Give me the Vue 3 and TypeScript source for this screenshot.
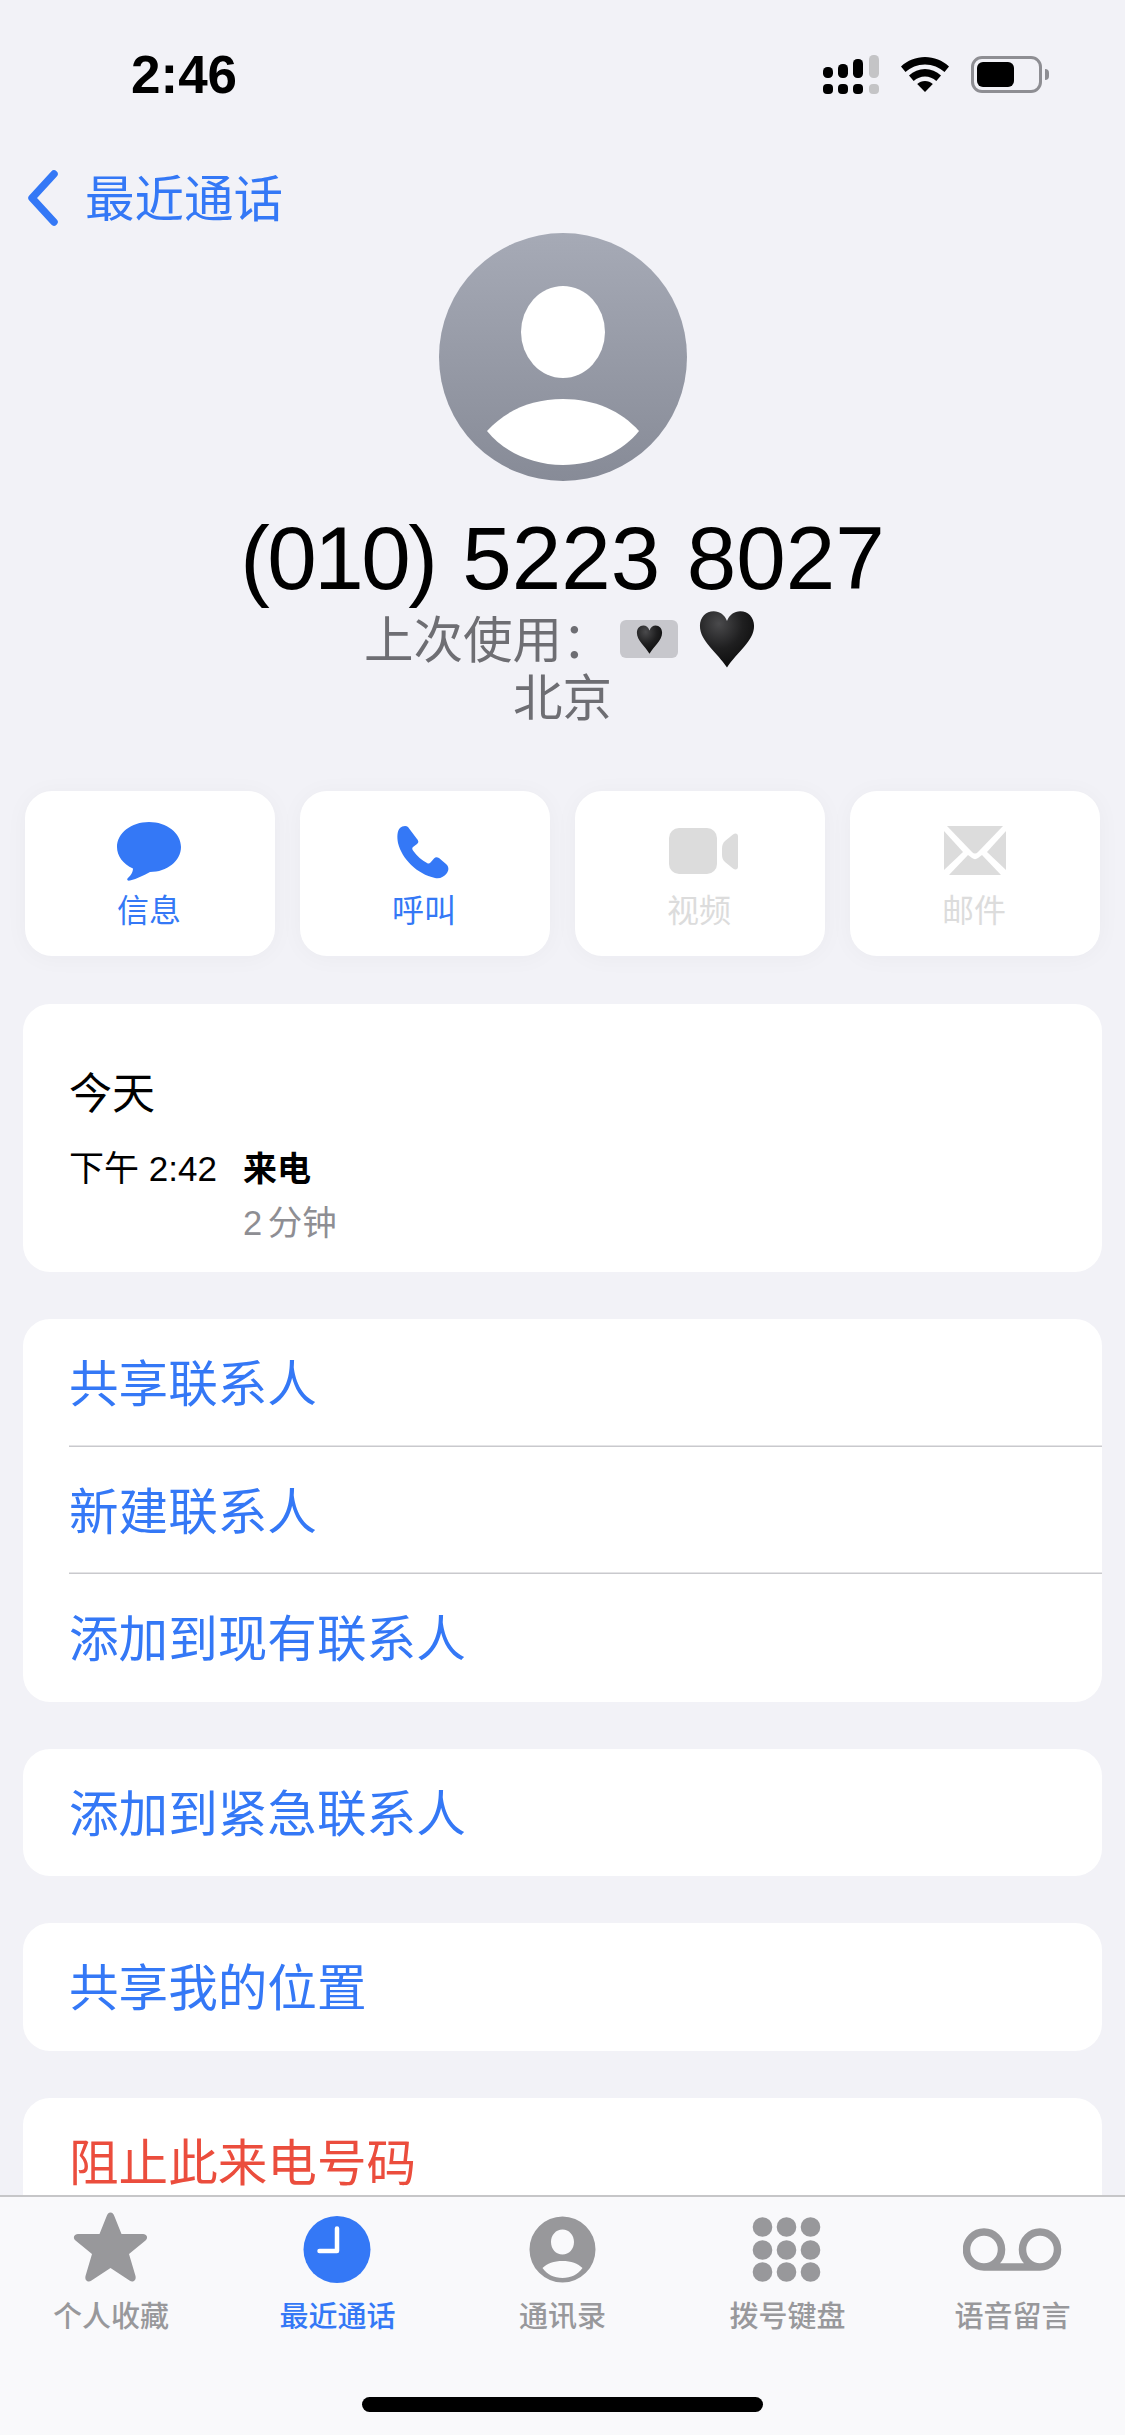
<template>
  <div class="screen">
    <!-- Status bar -->
    <div class="status-bar">
      <span class="clock">2:46</span>
      <div class="status-icons">
        <svg width="56" height="39" viewBox="0 0 56 39">
          <g fill="#000">
            <rect x="0" y="12" width="10" height="11" rx="4.5" />
            <rect x="0" y="29" width="10" height="10" rx="4" />
            <rect x="15" y="9" width="10" height="14" rx="4.5" />
            <rect x="15" y="29" width="10" height="10" rx="4" />
            <rect x="30" y="4" width="10" height="19" rx="4.5" />
            <rect x="30" y="29" width="10" height="10" rx="4" />
          </g>
          <g fill="#c4c4c6">
            <rect x="46" y="0" width="10" height="23" rx="4.5" />
            <rect x="46" y="29" width="10" height="10" rx="4" />
          </g>
        </svg>
        <svg width="48" height="35" viewBox="0 0 48 35">
          <path d="M24 0C15 0 6.500 3.500 0 9.500L4.500 15C9.500 10.500 16.500 7.500 24 7.500C31.500 7.500 38.500 10.500 43.500 15L48 9.500C41.500 3.500 33 0 24 0Z" />
          <path d="M24 12C18 12 12.500 14.300 8 18.500L12.700 24C16 21 19.800 19.400 24 19.400C28.200 19.400 32 21 35.300 24L40 18.500C35.500 14.300 30 12 24 12Z" />
          <path d="M24 24C21 24 18.400 25 16.200 27L24 35L31.800 27C29.600 25 27 24 24 24Z" />
        </svg>
        <div class="battery">
          <div class="battery-level"></div>
          <span class="battery-nub"></span>
        </div>
      </div>
    </div>

    <!-- Nav -->
    <div class="nav">
      <svg width="32" height="56" viewBox="0 0 32 56">
        <path d="M27 4 5 28l22 24" fill="none" stroke="#3478f6" stroke-width="7.500" stroke-linecap="round" stroke-linejoin="round" />
      </svg>
      <span class="nav-title">最近通话</span>
    </div>

    <!-- Caller header -->
    <div class="caller">
      <svg class="avatar" width="248" height="248" viewBox="0 0 248 248">
        <defs>
          <linearGradient id="avatarFill" x1="0" y1="0" x2="0" y2="1">
            <stop offset="0" stop-color="#a6aab6" />
            <stop offset="1" stop-color="#878b97" />
          </linearGradient>
          <radialGradient id="heartFill" cx="0.35" cy="0.22" r="0.8">
            <stop offset="0" stop-color="#4a4a4c" />
            <stop offset="0.55" stop-color="#1f1f20" />
            <stop offset="1" stop-color="#0c0c0c" />
          </radialGradient>
        </defs>
        <circle cx="124" cy="124" r="124" fill="url(#avatarFill)" />
        <ellipse cx="124" cy="99" rx="42" ry="46" fill="#fff" />
        <path d="M48 198C66 178 92 166 124 166C156 166 182 178 200 198C184 218 156 232 124 232C92 232 64 218 48 198Z" fill="#fff" />
      </svg>
      <div class="number"><span class="area-code">(010)</span> 5223 8027</div>
      <div class="last-used">
        <span class="last-used-text">上次使用：</span>
        <span class="sim-badge">
          <svg width="27" height="29" viewBox="0 0 24 24" preserveAspectRatio="none"><path :d="heartPath" fill="url(#heartFill)" /></svg>
        </span>
        <svg class="big-heart" width="58" height="58" viewBox="0 0 24 24" preserveAspectRatio="none"><path :d="heartPath" fill="url(#heartFill)" /></svg>
      </div>
      <div class="location">北京</div>
    </div>

    <!-- Action buttons -->
    <div class="actions">
      <div v-for="action in actions" :key="action.label" :class="['action', { disabled: action.disabled }]">
        <svg width="80" height="62" viewBox="-5 0 80 62" class="action-icon">
          <template v-if="action.icon === 'message'">
            <path d="M34 1C16.300 1 2 12.200 2 26C2 35 8 43 18 47.500C18 52 15 55 12.500 57.500C11.500 59 13 60 15 59.500C22 58 29 54 35 51C52 51 66 40 66 26C66 12.200 51.700 1 34 1Z" />
          </template>
          <template v-else-if="action.icon === 'phone'">
            <path d="M10 7C12 5 16 4 18 6L27 18C29 20.500 28.500 21.500 27 23L23 26C22 27 22 28 23 29.500C27 35 32 39.500 37 42C38.500 43 39.500 42.500 40.500 41.500L44 37.500C45.500 36 47 36 49 37L56 43C59 45.500 59 49 57 52C54 56 50 58 45 57C27 53 12 38 8 22C7 16 7 10 10 7Z" />
          </template>
          <template v-else-if="action.icon === 'video'">
            <rect x="4" y="7" width="48" height="46" rx="10" />
            <path d="M57 28C57 24 58 22 60 20L68 13.500C70.500 11.500 73 12.500 73 15.500V45.500C73 48.500 70.500 49.500 68 47.500L60 41C58 39 57 37 57 34Z" />
          </template>
          <template v-else>
            <path d="M7 5H63L38 31C36 33 34 33 32 31Z" />
            <path d="M4 10 23 31 4 49Z" />
            <path d="M66 10 47 31 66 49Z" />
            <path d="M9 54 28 34 32 37C34 38.500 36 38.500 38 37L42 34 61 54Z" />
          </template>
        </svg>
        <span class="action-label">{{ action.label }}</span>
      </div>
    </div>

    <!-- Call record -->
    <div class="card record">
      <div class="record-day">今天</div>
      <div class="record-row">
        <span class="record-time">下午 2:42</span>
        <div>
          <div class="record-kind">来电</div>
          <div class="record-length">2 分钟</div>
        </div>
      </div>
    </div>

    <!-- Link groups -->
    <div v-for="(group, index) in groups" :key="index" class="card group">
      <div v-for="row in group.rows" :key="row" :class="['row', { danger: group.danger }]">
        <span class="row-text">{{ row }}</span>
      </div>
    </div>

    <!-- Tab bar -->
    <div class="tab-bar">
      <div class="tabs">
        <div v-for="tab in tabs" :key="tab.label" :class="['tab', { active: tab.active }]">
          <svg width="100" height="72" viewBox="0 0 100 72" class="tab-icon">
            <path
              v-if="tab.icon === 'star'"
              d="M49.500 .5C51.500 .5 52.500 2 53.500 4.500L60.500 22H82C86 22 87.500 26 84.500 28.500L68 42L74.500 64C75.500 68.500 72 71 68.500 68.500L49.500 56L30.500 68.500C27 71 23.500 68.500 24.500 64L31 42L14.500 28.500C11.500 26 13 22 17 22H38.500L45.500 4.500C46.500 2 47.500 .5 49.500 .5Z"
            />
            <template v-else-if="tab.icon === 'clock'">
              <circle cx="49" cy="37.500" r="33.500" />
              <path d="M49 16.500V39H31.500" fill="none" stroke="#fff" stroke-width="4.500" stroke-linecap="round" stroke-linejoin="round" />
            </template>
            <path
              v-else-if="tab.icon === 'person'"
              fill-rule="evenodd"
              d="M49.500 4.500A33 33 0 1 0 49.500 70.500A33 33 0 1 0 49.500 4.500ZM49.500 17.500C56 17.500 61 23 61 30S56 42.500 49.500 42.500S38 37 38 30S43 17.500 49.500 17.500ZM29.500 56C34 51.500 41 49 49.500 49S65 51.500 69.500 56C65 62.500 58 66 49.500 66S34 62.500 29.500 56Z"
            />
            <template v-else-if="tab.icon === 'keypad'">
              <circle v-for="dot in keypadDots" :key="dot.x + '-' + dot.y" :cx="dot.x" :cy="dot.y" r="9.800" />
            </template>
            <path
              v-else
              fill="none"
              stroke-width="7.500"
              d="M21 55H77M21 20A17.500 17.500 0 1 0 21 55A17.500 17.500 0 1 0 21 20ZM77 20A17.500 17.500 0 1 0 77 55A17.500 17.500 0 1 0 77 20Z"
            />
          </svg>
          <span class="tab-label">{{ tab.label }}</span>
        </div>
      </div>
      <div class="home-indicator"></div>
    </div>
  </div>
</template>

<script setup lang="ts">
interface Action {
  label: string;
  icon: string;
  disabled?: boolean;
}

interface Group {
  rows: string[];
  danger?: boolean;
}

interface Tab {
  label: string;
  icon: string;
  active?: boolean;
}

const heartPath = 'M12 23.800C8 17.500 .8 13 .8 6.500C.8 3 3.300 .5 6.500 .5C9 .5 11 2 12 4.500C13 2 15 .5 17.500 .5C20.700 .5 23.200 3 23.200 6.500C23.200 13 16 17.500 12 23.800Z';

const actions: Action[] = [
  { label: '信息', icon: 'message' },
  { label: '呼叫', icon: 'phone' },
  { label: '视频', icon: 'video', disabled: true },
  { label: '邮件', icon: 'mail', disabled: true }
];

const groups: Group[] = [
  { rows: ['共享联系人', '新建联系人', '添加到现有联系人'] },
  { rows: ['添加到紧急联系人'] },
  { rows: ['共享我的位置'] },
  { rows: ['阻止此来电号码'], danger: true }
];

const tabs: Tab[] = [
  { label: '个人收藏', icon: 'star' },
  { label: '最近通话', icon: 'clock', active: true },
  { label: '通讯录', icon: 'person' },
  { label: '拨号键盘', icon: 'keypad' },
  { label: '语音留言', icon: 'voicemail' }
];

const keypadDots = [15, 38, 60].flatMap((y) => [24.5, 48.5, 72.5].map((x) => ({ x, y })));
</script>

<style>
html,
body {
  margin: 0;
  background: #f2f2f7;
}
</style>

<style scoped>
.screen {
  position: relative;
  width: 1125px;
  height: 2435px;
  overflow: hidden;
  background: #f2f2f7;
  font-family: "Liberation Sans", "Noto Sans CJK SC", sans-serif;
  color: #000;
}

.status-bar {
  display: flex;
  justify-content: space-between;
  align-items: center;
  height: 39px;
  padding: 55px 83px 0 131px;
}

.clock {
  font-size: 53px;
  font-weight: 700;
  line-height: 39px;
}

.status-icons {
  display: flex;
  align-items: center;
  gap: 22px;
}

.battery {
  position: relative;
  box-sizing: border-box;
  width: 71px;
  height: 37px;
  padding: 3px;
  border: 3px solid #8e8e93;
  border-radius: 11px;
}

.battery-level {
  width: 37px;
  height: 100%;
  background: #000;
  border-radius: 6px;
}

.battery-nub {
  position: absolute;
  top: 10px;
  right: -10px;
  width: 4px;
  height: 11px;
  background: #8e8e93;
  border-radius: 0 4px 4px 0;
}

.nav {
  display: flex;
  align-items: center;
  height: 56px;
  margin-top: 76px;
  padding-left: 27px;
}

.nav-title {
  margin-left: 26px;
  padding-bottom: 5px;
  font-size: 49.5px;
  color: #3478f6;
}

.caller {
  display: flex;
  flex-direction: column;
  align-items: center;
  margin-top: 7px;
}

.number {
  margin-top: 27px;
  font-size: 89px;
  line-height: 100px;
  word-spacing: 2px;
}

.area-code {
  letter-spacing: -2.5px;
}

.last-used {
  display: flex;
  align-items: center;
  height: 62px;
  padding-right: 6px;
  font-size: 49.5px;
  color: #6e6e73;
}

.last-used-text {
  width: 256px;
  padding-bottom: 5px;
}

.sim-badge {
  display: flex;
  align-items: center;
  justify-content: center;
  width: 58px;
  height: 38px;
  background: #c7c7cc;
  border-radius: 6px;
}

.big-heart {
  margin-left: 20px;
  margin-right: -1px;
}

.location {
  margin-top: 1px;
  font-size: 49.5px;
  line-height: 56px;
  color: #6e6e73;
}

.actions {
  display: grid;
  grid-template-columns: repeat(4, 250px);
  gap: 25px;
  margin-top: 64px;
  padding-left: 25px;
}

.action {
  display: flex;
  flex-direction: column;
  align-items: center;
  box-sizing: border-box;
  height: 165px;
  padding-top: 30px;
  background: #fff;
  border-radius: 27px;
  box-shadow: 0 2px 24px rgba(0, 0, 60, 0.035);
  color: #3478f6;
}

.action.disabled {
  color: #dcdcdc;
}

.action-icon {
  fill: currentColor;
}

.action-label {
  margin-top: 10px;
  padding-right: 2px;
  font-size: 32px;
  line-height: 36px;
}

.card {
  margin: 0 23px;
  background: #fff;
  border-radius: 27px;
  overflow: hidden;
}

.record {
  box-sizing: border-box;
  height: 268px;
  margin-top: 48px;
  padding: 65px 46px 0;
}

.record-day {
  font-size: 43px;
  line-height: 50px;
}

.record-row {
  display: flex;
  margin-top: 29px;
}

.record-time {
  width: 174px;
  font-size: 35px;
  line-height: 42px;
}

.record-kind {
  font-size: 34px;
  font-weight: 700;
  line-height: 42px;
}

.record-length {
  margin-top: 12px;
  font-size: 34.5px;
  line-height: 42px;
  word-spacing: -4px;
  color: #8e8e93;
}

.group {
  margin-top: 47px;
}

.row {
  display: flex;
  align-items: center;
  height: 127.500px;
  margin-left: 46px;
  font-size: 49.6px;
  color: #3478f6;
  box-shadow: inset 0 -1.500px 0 #c9c9cd;
}

.row:last-child {
  box-shadow: none;
}

.row-text {
  padding-bottom: 5px;
}

.row.danger {
  color: #eb4d3d;
}

.tab-bar {
  position: absolute;
  left: 0;
  right: 0;
  bottom: 0;
  height: 240px;
  box-sizing: border-box;
  border-top: 2px solid #c6c6c8;
  background: #f9f9fb;
}

.tabs {
  display: grid;
  grid-template-columns: repeat(5, 1fr);
}

.tab {
  display: flex;
  flex-direction: column;
  align-items: center;
  padding-top: 15px;
  color: #98989b;
}

.tab:first-child {
  padding-right: 3px;
}

.tab.active {
  color: #3478f6;
}

.tab-icon {
  fill: currentColor;
  stroke: currentColor;
  stroke-width: 0;
}

.tab-label {
  margin-top: 16px;
  font-size: 29px;
  font-weight: 500;
  line-height: 34px;
}

.home-indicator {
  position: absolute;
  left: 362px;
  bottom: 23px;
  width: 401px;
  height: 15px;
  background: #000;
  border-radius: 8px;
}
</style>
